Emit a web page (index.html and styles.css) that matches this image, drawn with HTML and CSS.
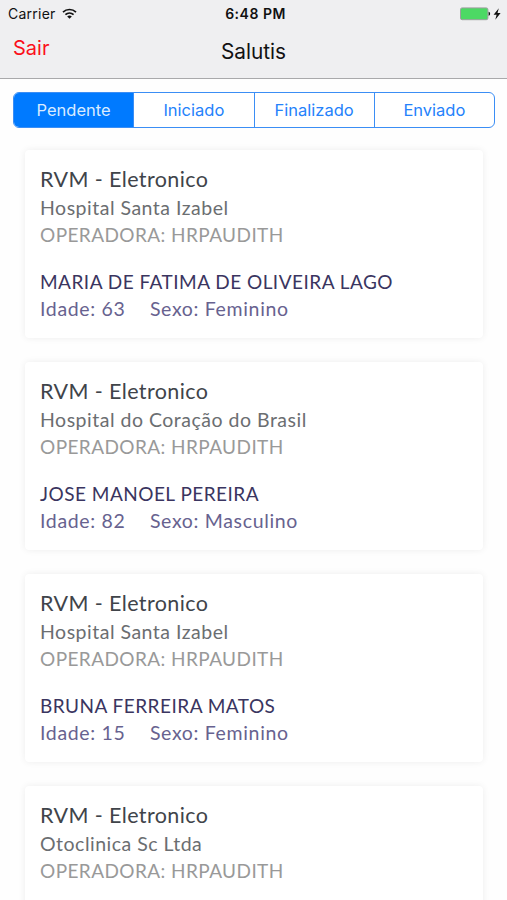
FILE: index.html
```html
<!DOCTYPE html>
<html lang="pt-BR">
<head>
	<meta charset="UTF-8">
	<title>Salutis</title>
	<link rel="stylesheet" href="styles.css">
</head>
<body>
	<header class="header">
		<div class="status">
			<div class="carrier">
				<span>Carrier</span>
				<svg class="wifi" viewBox="0 0 15 11" width="15" height="11">
					<path d="M1 4.1C4.7.6 10.3.6 14 4.1M3.4 6.7c2.4-2.2 5.8-2.2 8.2 0" fill="none" stroke="#111" stroke-width="1.7"/>
					<path d="M5.2 8.4c1.4-1.2 3.2-1.2 4.6 0L7.5 10.8z" fill="#111"/>
				</svg>
			</div>
			<span class="time">6:48 PM</span>
			<div class="power">
				<svg viewBox="0 0 42 14" width="42" height="14">
					<rect x=".5" y=".9" width="27.4" height="11.8" rx="1.6" fill="#4cd964" stroke="#9c9f9f"/>
					<path d="M28.6 4.8c2 .3 2 3.7 0 4z" fill="#111"/>
					<path d="M38.8 1.2L33.6 7.8h3l-1.3 5 5.3-6.9h-3.1z" fill="#111"/>
				</svg>
			</div>
		</div>
		<nav class="navbar">
			<a class="sair">Sair</a>
			<h1>Salutis</h1>
		</nav>
	</header>
	<div class="tabs">
		<span class="tab active">Pendente</span>
		<span class="tab">Iniciado</span>
		<span class="tab">Finalizado</span>
		<span class="tab">Enviado</span>
	</div>
	<ul class="list">
		<li class="card">
			<h2>RVM - Eletronico</h2>
			<p class="hospital">Hospital Santa Izabel</p>
			<p class="operadora">OPERADORA: HRPAUDITH</p>
			<p class="nome">MARIA DE FATIMA DE OLIVEIRA LAGO</p>
			<p class="dados"><span>Idade: 63</span><span>Sexo: Feminino</span></p>
		</li>
		<li class="card">
			<h2>RVM - Eletronico</h2>
			<p class="hospital">Hospital do Coração do Brasil</p>
			<p class="operadora">OPERADORA: HRPAUDITH</p>
			<p class="nome">JOSE MANOEL PEREIRA</p>
			<p class="dados"><span>Idade: 82</span><span>Sexo: Masculino</span></p>
		</li>
		<li class="card">
			<h2>RVM - Eletronico</h2>
			<p class="hospital">Hospital Santa Izabel</p>
			<p class="operadora">OPERADORA: HRPAUDITH</p>
			<p class="nome">BRUNA FERREIRA MATOS</p>
			<p class="dados"><span>Idade: 15</span><span>Sexo: Feminino</span></p>
		</li>
		<li class="card last">
			<h2>RVM - Eletronico</h2>
			<p class="hospital">Otoclinica Sc Ltda</p>
			<p class="operadora">OPERADORA: HRPAUDITH</p>
		</li>
	</ul>
</body>
</html>
```
FILE: styles.css
```css
*{margin: 0;padding: 0;box-sizing: border-box;}
li{list-style-type: none;}
html,body{height: 900px;overflow: hidden;}
body{background: #fefefe;font-family: Inter, "Liberation Sans", sans-serif;color: #111;}

.header{height: 79px;background: #efeff1;border-bottom: 1px solid #a9a9ab;}
.status{height: 27px;padding: 0 5px 0 8px;display: grid;grid-template-columns: 1fr auto 1fr;align-items: center;font-size: 14px;}
.carrier{display: flex;align-items: center;gap: 6px;letter-spacing: .25px;}
.wifi{display: block;}
.time{font-weight: 600;font-size: 14px;letter-spacing: .5px;padding-left: 1px;}
.power{display: flex;justify-content: flex-end;}
.navbar{height: 51px;padding: 0 13px;display: grid;grid-template-columns: 1fr auto 1fr;line-height: 28px;}
.sair{color: #fb0f1b;font-size: 20px;padding-top: 7px;}
.navbar h1{font-size: 20.8px;font-weight: 400;padding-top: 11px;}

.tabs{display: flex;height: 36px;margin: 13px 12px 0 13px;border: 1px solid #3b8ef5;border-radius: 6px;overflow: hidden;background: #fff;}
.tab{flex: 1;line-height: 34px;text-align: center;font-size: 16.5px;color: #2482fb;border-left: 1px solid #3b8ef5;}
.tab:first-child{border-left: none;}
.tab.active{background: #007aff;color: #d9ebff;}

.list{display: flex;flex-direction: column;gap: 24px;margin: 22px 24px 0 25px;}
.card{flex: none;height: 188px;padding: 15px;background: #fff;border-radius: 4px;box-shadow: 0 0 7px rgba(0,0,0,.07);font-family: Lato, "Noto Sans", sans-serif;font-size: 19px;line-height: 27px;white-space: nowrap;}
.card.last{height: 125px;}
.card h2{font-size: 21.5px;font-weight: 400;line-height: 29px;color: #40444a;letter-spacing: .4px;}
.hospital{font-size: 19.5px;color: #6b6e71;letter-spacing: .5px;}
.operadora{color: #999;letter-spacing: .42px;}
.nome{margin-top: 20px;color: #3a3560;letter-spacing: .48px;}
.dados{display: flex;gap: 24.5px;font-size: 19.5px;color: #67628f;letter-spacing: .66px;}
```
